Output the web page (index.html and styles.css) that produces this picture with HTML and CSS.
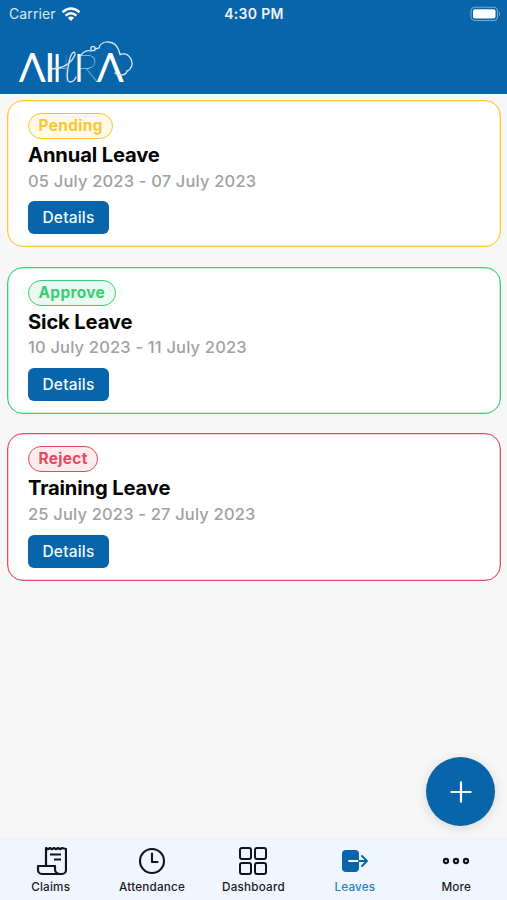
FILE: index.html
```html
<!DOCTYPE html>
<html lang="en">
<head>
<meta charset="utf-8">
<meta name="viewport" content="width=device-width, initial-scale=1">
<title>Leaves</title>
<link rel="stylesheet" href="styles.css">
</head>
<body>
<div class="app">
  <header class="header">
    <div class="status">
      <div class="carrier"><span>Carrier</span>
        <svg width="20" height="15" viewBox="0 0 20 15" fill="none" stroke="#fff" stroke-width="2.5"><path d="M1.5 5.2Q10-2.3 18.5 5.2M4.6 8.6Q10 4 15.4 8.6"/><path d="M6.8 10.7Q10 8.3 13.2 10.7L10 14Z" fill="#fff" stroke="none"/></svg>
      </div>
      <time class="time">4:30 PM</time>
      <svg class="battery" width="31" height="15" viewBox="0 0 31 15"><rect x="1" y=".3" width="26.5" height="13.2" rx="4" fill="none" stroke="#78a9d1" stroke-width="1.1"/><rect x="3" y="2.3" width="22.5" height="9.2" rx="2" fill="#fff"/><path d="M29 4.5q2 2.4 0 4.8Z" fill="#78a9d1"/></svg>
    </div>
    <svg class="logo" width="120" height="62" viewBox="16 31 120 62" role="img" aria-label="AIHRA">
      <text class="logo-text" y="82" x="18.8 44.2">ΛI</text>
      <text class="logo-text logo-script" transform="translate(54.3 82) scale(.5 1)">H</text>
      <text class="logo-text" y="82" x="75.8 96.8"><tspan class="logo-script">R</tspan>Λ</text>
      <path d="M57.2 54v28M79 54v28" stroke="#fff" stroke-width="3"/>
      <g fill="none" stroke="#d5e5f3" stroke-width="1.3" stroke-linecap="round"><path d="M52 69Q66 68 72 60Q77 53 74 52Q70 53 68 68Q66 82 70 82Q74 82 76 77M79 58Q84 49 91 51"/><circle cx="93" cy="48.5" r="2.2"/><path d="M95 49L99 48C101 40 115 39 119 51C121 57 119 54 122 54C130 53 135 63 130 69C128 72 127 70 127 71C126 76 118 76 115 73"/></g>
    </svg>
  </header>
  <main class="list">
    <article class="card pending"><span class="badge">Pending</span><h2>Annual Leave</h2><p>05 July 2023 - 07 July 2023</p><button>Details</button></article>
    <article class="card approve"><span class="badge">Approve</span><h2>Sick Leave</h2><p>10 July 2023 - 11 July 2023</p><button>Details</button></article>
    <article class="card reject"><span class="badge">Reject</span><h2>Training Leave</h2><p>25 July 2023 - 27 July 2023</p><button>Details</button></article>
  </main>
  <button class="fab" aria-label="Add leave"><svg width="24" height="24" viewBox="0 0 24 24" stroke="#fff" stroke-width="2.2"><path d="M12 1.5v21M1.5 12h21"/></svg></button>
  <nav class="tabs">
    <a class="tab claims"><svg viewBox="0 0 32 32" fill="none" stroke="#11151b" stroke-width="2.2" stroke-linejoin="round"><path d="M11 20V3l2 1.2L15 3l2 1.2L19 3l2 1.2L23 3l2 1.2L27 3l4 1v21a4 4 0 0 1-4 4H7a4 4 0 0 1-4-4v-4h17v3.5c0 2.6 2.4 4.5 5.5 4.5"/><path d="M15 9.5h11M19 14.5h7"/></svg><span>Claims</span></a>
    <a class="tab attendance"><svg viewBox="0 0 32 32" fill="none" stroke="#11151b" stroke-width="2.1" stroke-linecap="round" stroke-linejoin="round"><circle cx="16" cy="16" r="12"/><path d="M16 8.5V17h5.5"/></svg><span>Attendance</span></a>
    <a class="tab dashboard"><svg viewBox="0 0 32 32" fill="none" stroke="#11151b" stroke-width="2"><rect x="3" y="3" width="11" height="11" rx="2"/><rect x="18" y="3" width="11" height="11" rx="2"/><rect x="3" y="18" width="11" height="11" rx="2"/><rect x="18" y="18" width="11" height="11" rx="2"/></svg><span>Dashboard</span></a>
    <a class="tab leaves"><svg viewBox="0 0 32 32"><rect x="3" y="5" width="17" height="22" rx="4" fill="#0865a9"/><path d="M10 16h10" fill="none" stroke="#f0f6ff" stroke-width="1.9" stroke-linecap="round"/><path d="M20 16h8M23 11l5 5-5 5" fill="none" stroke="#0865a9" stroke-width="1.9" stroke-linecap="round" stroke-linejoin="round"/></svg><span>Leaves</span></a>
    <a class="tab more"><svg viewBox="0 0 32 32" fill="none" stroke="#11151b" stroke-width="2.1"><circle cx="6" cy="16" r="2.1"/><circle cx="16" cy="16" r="2.1"/><circle cx="26" cy="16" r="2.1"/></svg><span>More</span></a>
  </nav>
</div>
</body>
</html>
```
FILE: styles.css
```css
* { box-sizing: border-box; }
body { margin: 0; font-family: Inter, "Liberation Sans", sans-serif; background: #f7f7f7; }
.app { position: relative; height: 900px; display: flex; flex-direction: column; overflow: hidden; }
.header { height: 93.5px; background: #0865a9; color: #fff; flex: none; }
.status { height: 28px; display: grid; grid-template-columns: 1fr auto 1fr; align-items: center; padding: 0 7px 0 9px; font-size: 14px; line-height: 18px; }
.carrier { display: flex; align-items: center; gap: 5px; color: #dbe8f3; letter-spacing: .1px; }
.time { font-weight: 600; letter-spacing: .3px; color: #edf4fa; margin-left: -1px; }
.battery { justify-self: end; margin-right: -1px; overflow: visible; }
.logo { display: block; margin: 3px 0 0 16px; overflow: visible; }
.logo-text { fill: #fff; font-family: Lato, sans-serif; font-size: 40px; }
.logo-script { fill: #d5e5f3; font-weight: 100; font-size: 38px; }
.list { flex: 1; padding: 6.5px 6px 0 7px; display: flex; flex-direction: column; gap: 19.5px; }
.card { height: 147.2px; border: 1px solid var(--c); box-shadow: inset 0 0 0 .3px var(--c); border-radius: 16px; background: #fff; padding: 12px 20px; display: flex; flex-direction: column; align-items: flex-start; }
.pending { --c: #fdc72f; --b: #fff9e8; }
.approve { --c: #36cf74; --b: #eafaf0; }
.reject { --c: #e44a60; --b: #ffebee; }
.badge { height: 26px; border: 1px solid var(--c); border-radius: 13px; background: var(--b); color: var(--c); padding: 0 9.5px; font-size: 15.4px; font-weight: 700; line-height: 24px; letter-spacing: .35px; }
h2 { margin: 3px 0 0; font-size: 20.2px; line-height: 26px; font-weight: 700; letter-spacing: -.15px; color: #050505; }
p { margin: .7px 0 0; font-size: 16.5px; line-height: 24px; font-weight: 500; color: #a1a1a1; letter-spacing: .17px; }
.card button { margin-top: 8.8px; height: 33px; width: 81px; border: 0; border-radius: 6px; padding: 0; background: #0865a9; color: #f4f9fd; font: 500 15.5px/33px Inter, sans-serif; letter-spacing: .2px; }
.fab { position: absolute; right: 12px; bottom: 74px; width: 69px; height: 69px; border: 0; border-radius: 50%; padding: 0; display: flex; align-items: center; justify-content: center; background: #0865a9; box-shadow: 0 2px 12px #0002; }
.tabs { flex: none; height: 62px; background: #f0f6ff; border-top: 1px solid #eceff4; display: grid; grid-template-columns: repeat(5, 1fr); }
.tab { display: flex; flex-direction: column; align-items: center; padding-top: 6px; font-size: 11.7px; line-height: 16px; font-weight: 500; letter-spacing: .2px; color: #161a20; }
.tab svg { width: 32px; height: 32px; }
.tab span { margin-top: 2px; }
.leaves { color: #287fc0; }
```
